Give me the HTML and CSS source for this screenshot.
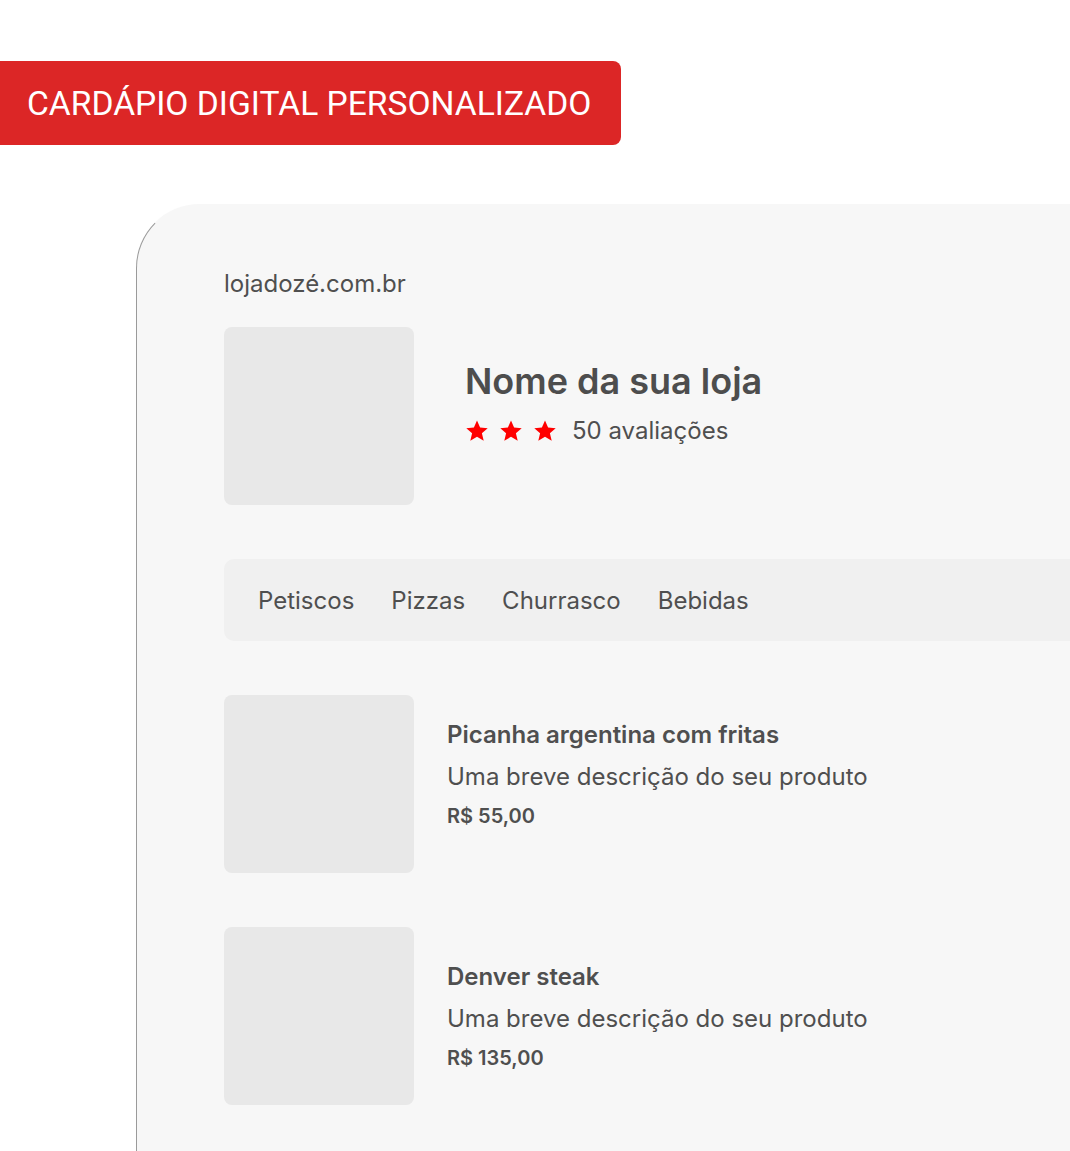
FILE: index.html
```html
<!DOCTYPE html>
<html lang="pt-BR">
<head>
<meta charset="utf-8">
<title>Cardápio digital</title>
<link rel="stylesheet" href="styles.css">
</head>
<body>
<div class="page">
  <div class="banner">CARDÁPIO DIGITAL PERSONALIZADO</div>
  <div class="card">
    <div class="domain">lojadozé.com.br</div>
    <div class="store">
      <div class="thumb"></div>
      <div class="store-info">
        <div class="store-name">Nome da sua loja</div>
        <div class="rating">
          <span class="stars">
            <svg viewBox="0 0 24 24" class="star"><path d="M12 1.5l3.1 7 7.6.7-5.8 5 1.8 7.5L12 17.8l-6.7 3.9 1.8-7.5-5.8-5 7.6-.7z"/></svg>
            <svg viewBox="0 0 24 24" class="star"><path d="M12 1.5l3.1 7 7.6.7-5.8 5 1.8 7.5L12 17.8l-6.7 3.9 1.8-7.5-5.8-5 7.6-.7z"/></svg>
            <svg viewBox="0 0 24 24" class="star"><path d="M12 1.5l3.1 7 7.6.7-5.8 5 1.8 7.5L12 17.8l-6.7 3.9 1.8-7.5-5.8-5 7.6-.7z"/></svg>
          </span>
          <span class="count">50 avaliações</span>
        </div>
      </div>
    </div>
    <nav class="tabs">
      <span class="tab">Petiscos</span>
      <span class="tab">Pizzas</span>
      <span class="tab">Churrasco</span>
      <span class="tab">Bebidas</span>
    </nav>
    <div class="products">
      <div class="product">
        <div class="thumb"></div>
        <div class="product-info first">
          <div class="p-title">Picanha argentina com fritas</div>
          <div class="p-desc">Uma breve descrição do seu produto</div>
          <div class="p-price">R$ 55,00</div>
        </div>
      </div>
      <div class="product">
        <div class="thumb"></div>
        <div class="product-info second">
          <div class="p-title">Denver steak</div>
          <div class="p-desc">Uma breve descrição do seu produto</div>
          <div class="p-price">R$ 135,00</div>
        </div>
      </div>
    </div>
  </div>
</div>
</body>
</html>
```

FILE: styles.css
```css
html, body {
  margin: 0;
  padding: 0;
  background: #ffffff;
  overflow: hidden;
}
body {
  width: 1070px;
  height: 1151px;
  font-family: Inter, "Noto Sans", sans-serif;
  color: #4f4f4f;
}
.page {
  padding-top: 61px;
}
.banner {
  width: 621px;
  height: 84px;
  box-sizing: border-box;
  background: #dc2626;
  border-radius: 0 8px 8px 0;
  color: #ffffff;
  font-family: Roboto, "Liberation Sans", sans-serif;
  font-size: 33.6px;
  font-weight: 400;
  display: flex;
  align-items: center;
  padding-left: 27px;
  white-space: nowrap;
}
.card {
  margin-top: 59px;
  margin-left: 136px;
  width: 1000px;
  height: 1000px;
  background: #f7f7f7;
  border-left: 1px solid #9a9a9a;
  border-top: 1px solid transparent;
  border-top-left-radius: 64px;
  padding: 63px 0 0 87px;
  box-sizing: border-box;
}
.domain {
  font-size: 24px;
  line-height: 32px;
  color: #4f4f4f;
}
.store {
  display: flex;
  margin-top: 27px;
}
.thumb {
  width: 190px;
  height: 178px;
  background: #e8e8e8;
  border-radius: 8px;
  flex: none;
}
.store-info {
  margin-left: 51px;
  padding-top: 32px;
}
.store-name {
  font-size: 36px;
  font-weight: 600;
  line-height: 44px;
  color: #4d4d4d;
}
.rating {
  display: flex;
  align-items: center;
  margin-top: 13px;
  height: 30px;
}
.stars {
  display: flex;
  gap: 10px;
}
.star {
  width: 24px;
  height: 24px;
  fill: #ff0000;
}
.count {
  margin-left: 15px;
  font-size: 24px;
  line-height: 30px;
}
.tabs {
  margin-top: 54px;
  height: 82px;
  background: #f0f0f0;
  border-radius: 10px 0 0 10px;
  display: flex;
  align-items: center;
  padding-left: 34px;
  gap: 37px;
}
.tab {
  font-size: 24px;
}
.products {
  display: flex;
  flex-direction: column;
  gap: 54px;
  margin-top: 54px;
}
.product {
  display: flex;
}
.product-info {
  margin-left: 33px;
}
.product-info.first {
  padding-top: 25px;
}
.product-info.second {
  padding-top: 35px;
}
.p-title {
  font-size: 24px;
  font-weight: 600;
  line-height: 30px;
}
.p-desc {
  font-size: 24px;
  line-height: 30px;
  margin-top: 12px;
}
.p-price {
  font-size: 20px;
  font-weight: 600;
  line-height: 24px;
  margin-top: 12px;
}
```
